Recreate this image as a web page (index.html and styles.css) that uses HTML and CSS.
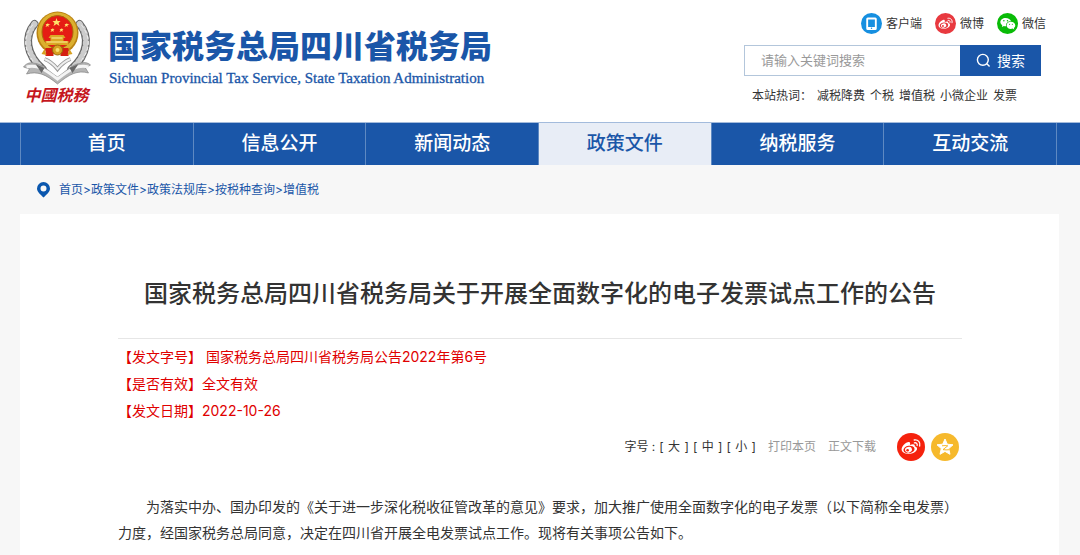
FILE: index.html
```html
<!DOCTYPE html>
<html lang="zh-CN">
<head>
<meta charset="utf-8">
<meta name="viewport" content="width=device-width, initial-scale=1">
<title>国家税务总局四川省税务局</title>
<link rel="stylesheet" href="styles.css">
</head>
<body>
<svg class="defs" aria-hidden="true">
  <symbol id="weibo" viewBox="0 0 28 28">
    <path fill="#fff" d="M12.6 9.2c-1.100-.8-4 .5-6 2.900-2.300 2.600-2.700 5.300-.5 7.200 2.600 2.200 8.200 2.200 11.500 0 3.200-2.100 3.400-4.900.1-6 .7-1.900-1.400-2.600-4.800-1.200.4-1.300.4-2.300-.3-2.900z"/>
    <ellipse cx="12" cy="16.500" rx="5.600" ry="3.800" transform="rotate(-8 12 16.500)" class="cut"/>
    <ellipse cx="11.500" cy="16.700" rx="3.500" ry="2.800" fill="#fff" transform="rotate(-15 11.500 16.700)"/>
    <circle cx="10.600" cy="17.200" r="1.300" class="cut"/>
    <path d="M17.400 9.800c2-.4 3.200 1 2.700 2.700M17.200 7c3.900-.7 6.500 2.300 5.500 6" fill="none" stroke="#fff" stroke-width="1.300" stroke-linecap="round"/>
  </symbol>
</svg>

<header class="header">
  <a class="brand" href="#">
    <span class="emblem">
      <svg class="emblem-art" viewBox="20 10 72 76" aria-hidden="true">
        <g fill="none" stroke-linecap="round">
          <path d="M34 24C24 36 25 54 42 69M79 24C89 36 88 54 71 69" stroke="#666" stroke-width="8"/>
          <path d="M34 24C24 36 25 54 42 69M79 24C89 36 88 54 71 69" stroke="#ccc" stroke-width="6" stroke-dasharray="1 4"/>
          <path d="M32 25C22 38 23 51 36 65M81 25C91 38 90 51 77 65" stroke="#eee" stroke-width="1" stroke-dasharray="3 3"/>
        </g>
        <ellipse cx="57" cy="33" rx="21" ry="21.500" fill="#bb8414"/>
        <ellipse cx="57" cy="32.500" rx="19.500" ry="20" fill="#dcb02f"/>
        <ellipse cx="57" cy="32" rx="15.500" ry="16.500" fill="#e51c14" stroke="#a86b0c"/>
        <path fill="#ffe36b" d="m56 18 1 3h3l-2 2 1 3-3-2-3 2 1-3-2-2h3zM47 23l1 1h2l-2 1v2l-1-1-2 1 1-2-1-1h2zM66 23l1 1h2l-2 1v2l-1-1-2 1 1-2-1-1h2zM52 28l1 1h1l-1 1v2l-1-1-2 1 1-2-1-1h2zM61 28l1 1h1l-1 1v2l-1-1-2 1 1-2-1-1h2z"/>
        <path fill="#dca925" d="M50 35h13l2 3h-2v3h5v4H45v-4h5v-3h-2z"/>
        <path d="M51 38h11M46 42h21" stroke="#fff09a" stroke-width="1"/>
        <path d="M45 48h8v8h-8zM60 48h8v8h-8z" fill="#d51f12"/>
        <path d="m44 49-3 5 5 1zm25 0 3 5-5 1z" fill="#d8a021"/>
        <circle cx="57" cy="50" r="5" fill="#d8a021" stroke="#9b690d"/>
        <circle cx="57" cy="50" r="2" fill="#f8df6d"/>
        <path d="M23 67c2-3 6-5 10-4 9 1 15 8 24 14 9-6 15-13 24-14 4-1 7 0 9 2l-5 3 3 5c-11-3-19 1-31 11-12-10-20-13-31-10l3-5z" fill="#b5b5b5" stroke="#777" stroke-width=".6"/>
        <path d="M26 67c11-3 19 3 31 12 12-9 20-15 31-12" fill="none" stroke="#f4f4f4" stroke-width="3"/>
        <path d="m35 64 9 4-3 5zm43 0-9 4 3 5z" fill="#686868"/>
        <path d="M44 59c5 2 9 5 13 10 4-5 8-8 13-10" fill="none" stroke="#999" stroke-width="4"/>
        <path d="M44 59c5 2 9 5 13 10 4-5 8-8 13-10" fill="none" stroke="#eee" stroke-width="2"/>
      </svg>
      <span class="emblem-name">中國税務</span>
    </span>
    <span class="brand-text">
      <span class="brand-cn">国家税务总局四川省税务局</span>
      <span class="brand-en">Sichuan Provincial Tax Service, State Taxation Administration</span>
    </span>
  </a>

  <div class="tools">
    <div class="channels">
      <a href="#"><svg viewBox="0 0 28 28" aria-hidden="true"><circle cx="14" cy="14" r="14" fill="#168fe0"/><path fill="#fff" fill-rule="evenodd" d="M9 6h10a2 2 0 0 1 2 2v12.500a2 2 0 0 1-2 2H9a2 2 0 0 1-2-2V8a2 2 0 0 1 2-2zm.5 2.500v10h9v-10z"/><circle cx="14" cy="20.400" r="1" fill="#168fe0"/></svg>客户端</a>
      <a href="#"><svg class="soft-red" viewBox="0 0 28 28" aria-hidden="true"><circle cx="14" cy="14" r="14" class="cut"/><use href="#weibo"/></svg>微博</a>
      <a href="#"><svg viewBox="0 0 28 28" aria-hidden="true"><circle cx="14" cy="14" r="14" fill="#09bb07"/><path fill="#fff" d="M11.500 6.500C7.400 6.500 4.500 9 4.500 12c0 1.800 1 3.300 2.500 4.300L6.500 18.500l2.700-1.300c1 .3 2 .4 3 .3-.9-4 2.700-6.800 6.500-6.600-.6-2.600-3.600-4.400-7.200-4.400z"/><path fill="#fff" d="M18.500 11.800c-3.400 0-5.700 2.100-5.700 4.700s2.500 4.700 5.700 4.700c.8 0 1.500-.1 2.200-.4l2.300 1.200-.6-2c1.300-.9 2-2.100 2-3.500 0-2.600-2.600-4.700-5.900-4.700z"/><g fill="#09bb07"><circle cx="9.200" cy="10.300" r="1"/><circle cx="14" cy="10.300" r="1"/><circle cx="16.700" cy="15" r=".8"/><circle cx="20.500" cy="15" r=".8"/></g></svg>微信</a>
    </div>
    <form class="search" onsubmit="return false">
      <input type="text" placeholder="请输入关键词搜索" aria-label="请输入关键词搜索">
      <button type="submit"><svg viewBox="0 0 16 16" aria-hidden="true"><circle cx="7.300" cy="7.300" r="5.800"/><path d="m11.500 11.500 3 3"/></svg>搜索</button>
    </form>
    <div class="hot"><span class="hot-label">本站热词：</span><a href="#">减税降费</a><a href="#">个税</a><a href="#">增值税</a><a href="#">小微企业</a><a href="#">发票</a></div>
  </div>
</header>

<nav class="nav">
  <ul>
    <li><a href="#">首页</a></li>
    <li><a href="#">信息公开</a></li>
    <li><a href="#">新闻动态</a></li>
    <li><a class="active" href="#">政策文件</a></li>
    <li><a href="#">纳税服务</a></li>
    <li><a href="#">互动交流</a></li>
  </ul>
</nav>

<div class="crumbs">
  <svg viewBox="0 0 13 16" aria-hidden="true"><path fill="#0b57ae" fill-rule="evenodd" d="M6.500 0A6.500 6.500 0 0 0 0 6.500C0 10 3.500 12.500 6.500 15.500 9.500 12.500 13 10 13 6.500A6.500 6.500 0 0 0 6.500 0zm0 3.600a3 3 0 1 1 0 6 3 3 0 0 1 0-6z"/></svg>
  <div><a href="#">首页</a>&gt;<a href="#">政策文件</a>&gt;<a href="#">政策法规库</a>&gt;<a href="#">按税种查询</a>&gt;<a href="#">增值税</a></div>
</div>

<main class="article">
  <h1>国家税务总局四川省税务局关于开展全面数字化的电子发票试点工作的公告</h1>
  <div class="meta">
    <p>【发文字号】 国家税务总局四川省税务局公告2022年第6号</p>
    <p>【是否有效】全文有效</p>
    <p>【发文日期】2022-10-26</p>
  </div>
  <div class="actions">
    <div class="sizes"><span>字号 :</span><button type="button">[ <span>大</span> ]</button><button type="button">[ <span>中</span> ]</button><button type="button">[ <span>小</span> ]</button></div>
    <a class="muted" href="#">打印本页</a>
    <a class="muted" href="#">正文下载</a>
    <div class="share">
      <a href="#" aria-label="微博"><svg class="hot-red" viewBox="0 0 28 28" aria-hidden="true"><circle cx="14" cy="14" r="14" class="cut"/><use href="#weibo"/></svg></a>
      <a href="#" aria-label="QQ空间"><svg viewBox="0 0 28 28" aria-hidden="true"><circle cx="14" cy="14" r="14" fill="#f6b92c"/><path fill="#fff" stroke="#fff" stroke-linejoin="round" d="m14 6 2.300 5.200 5.700.6-4.300 3.800 1.300 5.700-5-2.900-5 2.900 1.300-5.700L6 11.800l5.700-.6z"/><path d="M11 12.800c2-.3 4-.3 5.800 0l-4.800 3.800c2 .4 4 .4 6.500.1" fill="none" stroke="#f6b92c" stroke-width="1"/></svg></a>
    </div>
  </div>
  <p class="body-text">为落实中办、国办印发的《关于进一步深化税收征管改革的意见》要求，加大推广使用全面数字化的电子发票（以下简称全电发票）力度，经国家税务总局同意，决定在四川省开展全电发票试点工作。现将有关事项公告如下。</p>
</main>
</body>
</html>
```

FILE: styles.css
```css
* {
  box-sizing: border-box;
}

body {
  margin: 0;
  background: #f7f7f7;
  color: #333;
  font: 12px/20px Inter, "Noto Sans CJK SC", sans-serif;
}

a {
  color: inherit;
  text-decoration: none;
}

p,
h1,
ul {
  margin: 0;
  padding: 0;
}

button {
  font: inherit;
  color: inherit;
  border: 0;
  padding: 0;
  background: none;
  cursor: pointer;
}

svg {
  display: block;
  flex: none;
}

.defs {
  display: none;
}

.cut {
  fill: currentColor;
}

.soft-red {
  color: #e8393f;
}

.hot-red {
  color: #f5220d;
}

.header {
  display: flex;
  justify-content: space-between;
  padding: 10px 34px 16px 20px;
  background: #fff;
}

.brand {
  display: flex;
  gap: 15px;
  color: #1a56a8;
}

.emblem {
  display: flex;
  flex-direction: column;
  width: 73px;
}

.emblem-art {
  width: 73px;
  height: 76px;
}

.emblem-name {
  color: #c5161d;
  font: italic bold 16px/16px "Noto Sans CJK SC", sans-serif;
  text-align: center;
}

.brand-text {
  display: flex;
  flex-direction: column;
  padding-top: 14px;
  white-space: nowrap;
}

.brand-cn {
  font: 900 32px/40px "Noto Sans CJK SC", sans-serif;
}

.brand-en {
  padding-left: 1px;
  font: 15px/28px "Liberation Serif", serif;
  -webkit-text-stroke: 0.3px;
}

.tools {
  width: 302px;
}

.channels {
  display: flex;
  justify-content: flex-end;
  gap: 13px;
  padding-top: 3px;
}

.channels a {
  display: flex;
  align-items: center;
  gap: 4px;
}

.channels svg {
  width: 21px;
  height: 21px;
}

.search {
  display: flex;
  width: 297px;
  height: 31px;
  margin-top: 11px;
}

.search input {
  flex: 1;
  min-width: 0;
  padding: 0 16px 2px;
  border: 1px solid #b3c6db;
  border-right: 0;
  border-radius: 0;
  outline: 0;
  font: inherit;
  font-size: 13px;
}

.search input::placeholder {
  color: #999;
}

.search button {
  display: flex;
  align-items: center;
  justify-content: center;
  gap: 6px;
  width: 81px;
  background: #1a56a8;
  color: #fff;
  font-size: 14px;
}

.search svg {
  width: 15px;
  height: 15px;
  fill: none;
  stroke: currentColor;
  stroke-width: 1.5;
}

.hot {
  display: flex;
  gap: 5px;
  padding: 10px 0 0 8px;
  white-space: nowrap;
}

.nav {
  padding: 0 23px 0 20px;
  border-top: 1px solid #a3bbdc;
  background: #1a56a8;
  color: #fff;
}

.nav ul {
  display: flex;
  list-style: none;
  border-left: 1px solid #5e89c2;
}

.nav li {
  flex: 1;
  border-right: 1px solid #5e89c2;
}

.nav a {
  display: block;
  font-size: 19px;
  font-weight: 500;
  line-height: 42px;
  text-align: center;
}

.nav .active {
  background: #e8edf6;
  color: #1a56a8;
}

.crumbs {
  display: flex;
  align-items: center;
  gap: 9px;
  height: 49px;
  padding-left: 37px;
  color: #1a56a8;
}

.crumbs svg {
  width: 13px;
  height: 16px;
}

.article {
  margin: 0 21px 0 20px;
  padding: 61px 97px 20px 98px;
  background: #fff;
}

.article h1 {
  padding-bottom: 25px;
  border-bottom: 1px solid #e6e6e6;
  font-size: 24px;
  font-weight: 500;
  line-height: 38px;
  text-align: center;
}

.meta {
  padding-top: 4px;
  color: #e00000;
  font-size: 14px;
  line-height: 27px;
}

.actions {
  display: flex;
  align-items: center;
  justify-content: flex-end;
  gap: 12px;
  padding: 9px 3px 0 0;
}

.sizes {
  display: flex;
  gap: 4px;
}

.sizes button span {
  padding: 0 1px;
}

.muted {
  color: #999;
}

.share {
  display: flex;
  gap: 6px;
  padding-left: 9px;
}

.share svg {
  width: 28px;
  height: 28px;
}

.body-text {
  padding-top: 33px;
  font-size: 14px;
  line-height: 26px;
  text-indent: 2em;
}
```
